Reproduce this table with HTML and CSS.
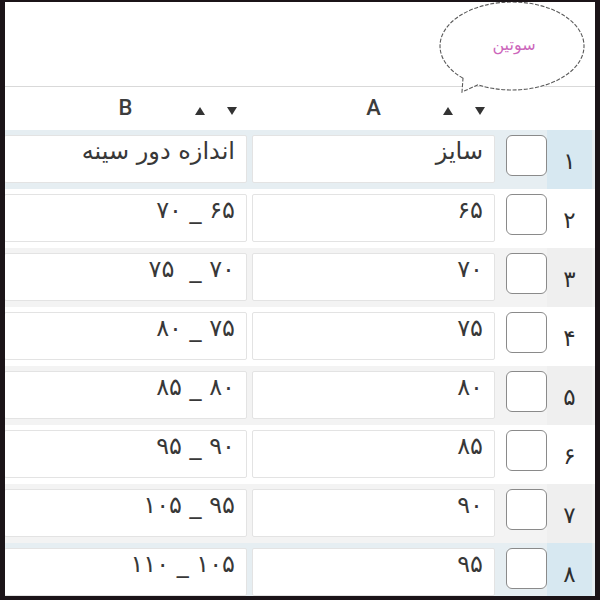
FILE: index.html
```html
<!DOCTYPE html>
<html lang="fa">
<head>
<meta charset="utf-8">
<title>سوتین</title>
<link rel="stylesheet" href="styles.css">
</head>
<body>
<div class="frame">
  <div class="top">
    <svg class="bubble" width="160" height="96" viewBox="0 0 160 96">
      <path d="M31,76.24 A72,44 0 1 1 46,82.79 L30,90 Z" fill="#fff" stroke="#5a5a5a" stroke-width="1.1" stroke-dasharray="4 1.6"/>
      <text x="82" y="48" text-anchor="middle" class="bubble-text">سوتین</text>
    </svg>
  </div>
  <div class="row head">
    <div class="num"></div>
    <div class="check-slot"></div>
    <div class="hcell"><span class="htext">A</span><span class="arrows"><svg width="10" height="8" viewBox="0 0 10 8"><path d="M5 0 L10 8 L0 8 Z" fill="#333"/></svg><svg width="10" height="8" viewBox="0 0 10 8"><path d="M0 0 L10 0 L5 8 Z" fill="#333"/></svg></span></div>
    <div class="hcell"><span class="htext">B</span><span class="arrows"><svg width="10" height="8" viewBox="0 0 10 8"><path d="M5 0 L10 8 L0 8 Z" fill="#333"/></svg><svg width="10" height="8" viewBox="0 0 10 8"><path d="M0 0 L10 0 L5 8 Z" fill="#333"/></svg></span></div>
  </div>
  <div class="row sel"><div class="num">۱</div><div class="check-slot"><span class="box"></span></div><div class="cell">سایز</div><div class="cell">اندازه دور سینه</div></div>
  <div class="row"><div class="num">۲</div><div class="check-slot"><span class="box"></span></div><div class="cell">۶۵</div><div class="cell">۶۵ _ ۷۰</div></div>
  <div class="row alt"><div class="num">۳</div><div class="check-slot"><span class="box"></span></div><div class="cell">۷۰</div><div class="cell">۷۰ _  ۷۵</div></div>
  <div class="row"><div class="num">۴</div><div class="check-slot"><span class="box"></span></div><div class="cell">۷۵</div><div class="cell">۷۵ _ ۸۰</div></div>
  <div class="row alt"><div class="num">۵</div><div class="check-slot"><span class="box"></span></div><div class="cell">۸۰</div><div class="cell">۸۰ _ ۸۵</div></div>
  <div class="row"><div class="num">۶</div><div class="check-slot"><span class="box"></span></div><div class="cell">۸۵</div><div class="cell">۹۰ _ ۹۵</div></div>
  <div class="row alt"><div class="num">۷</div><div class="check-slot"><span class="box"></span></div><div class="cell">۹۰</div><div class="cell">۹۵ _ ۱۰۵</div></div>
  <div class="row sel"><div class="num">۸</div><div class="check-slot"><span class="box"></span></div><div class="cell">۹۵</div><div class="cell">۱۰۵ _ ۱۱۰</div></div>
</div>
</body>
</html>
```
FILE: styles.css
```css
html, body {
  margin: 0;
  padding: 0;
  background: #1b1418;
  height: 600px;
  overflow: hidden;
}
.frame {
  margin: 2px 5px 0 5px;
  width: 590px;
  height: 594px;
  background: #fff;
  overflow: hidden;
  position: relative;
  font-family: "DejaVu Sans", sans-serif;
}
.top {
  height: 84px;
  border-bottom: 1px solid #d9d9d9;
  position: relative;
}
.bubble {
  position: absolute;
  left: 427px;
  top: 0;
  overflow: visible;
}
.bubble-text {
  font-family: "DejaVu Sans", sans-serif;
  font-size: 16px;
  fill: #cc66bb;
}
.row {
  direction: rtl;
  display: flex;
  align-items: flex-start;
  height: 59px;
  box-sizing: border-box;
  padding: 5px 3px 0 0;
  width: 590px;
}
.row.head {
  height: 43px;
  padding-top: 0;
  align-items: center;
}
.row.sel { background: #e6eef2; }
.row.sel .num { background: #d7e8f1; }
.row.alt { background: #f3f3f3; }
.row.alt .num { background: #efefef; }
.num {
  width: 45px;
  flex: none;
  height: 59px;
  margin-top: -5px;
  box-sizing: border-box;
  padding-top: 17px;
  text-align: center;
  font-size: 23px;
  line-height: 28px;
  color: #2e2e2e;
}
.head .num { height: 43px; margin-top: 0; }
.check-slot {
  width: 41px;
  flex: none;
  margin-left: 11px;
  height: 41px;
}
.head .check-slot { height: 10px; }
.box {
  display: block;
  width: 41px;
  height: 41px;
  box-sizing: border-box;
  border: 1.5px solid #8a8a8a;
  border-radius: 6px;
  background: #fff;
}
.cell {
  width: 243px;
  flex: none;
  height: 48px;
  margin-left: 5px;
  box-sizing: border-box;
  border: 1px solid #e3e3e3;
  border-radius: 2px;
  background: #fff;
  padding: 0 11px 0 8px;
  font-size: 24px;
  line-height: 30px;
  color: #383838;
  text-align: right;
  white-space: pre;
}
.hcell {
  width: 243px;
  flex: none;
  margin-left: 5px;
  direction: ltr;
  display: grid;
  grid-template-columns: 1fr auto 1fr;
  align-items: center;
}
.htext {
  grid-column: 2;
  font-family: Roboto, "Liberation Sans", sans-serif;
  font-weight: 500;
  font-size: 22px;
  color: #3d3d3d;
  line-height: 24px;
  padding-bottom: 2px;
}
.arrows {
  grid-column: 3;
  justify-self: end;
  display: flex;
  gap: 22px;
  padding-right: 10px;
  padding-top: 4px;
}
.arrows svg { display: block; }
```
